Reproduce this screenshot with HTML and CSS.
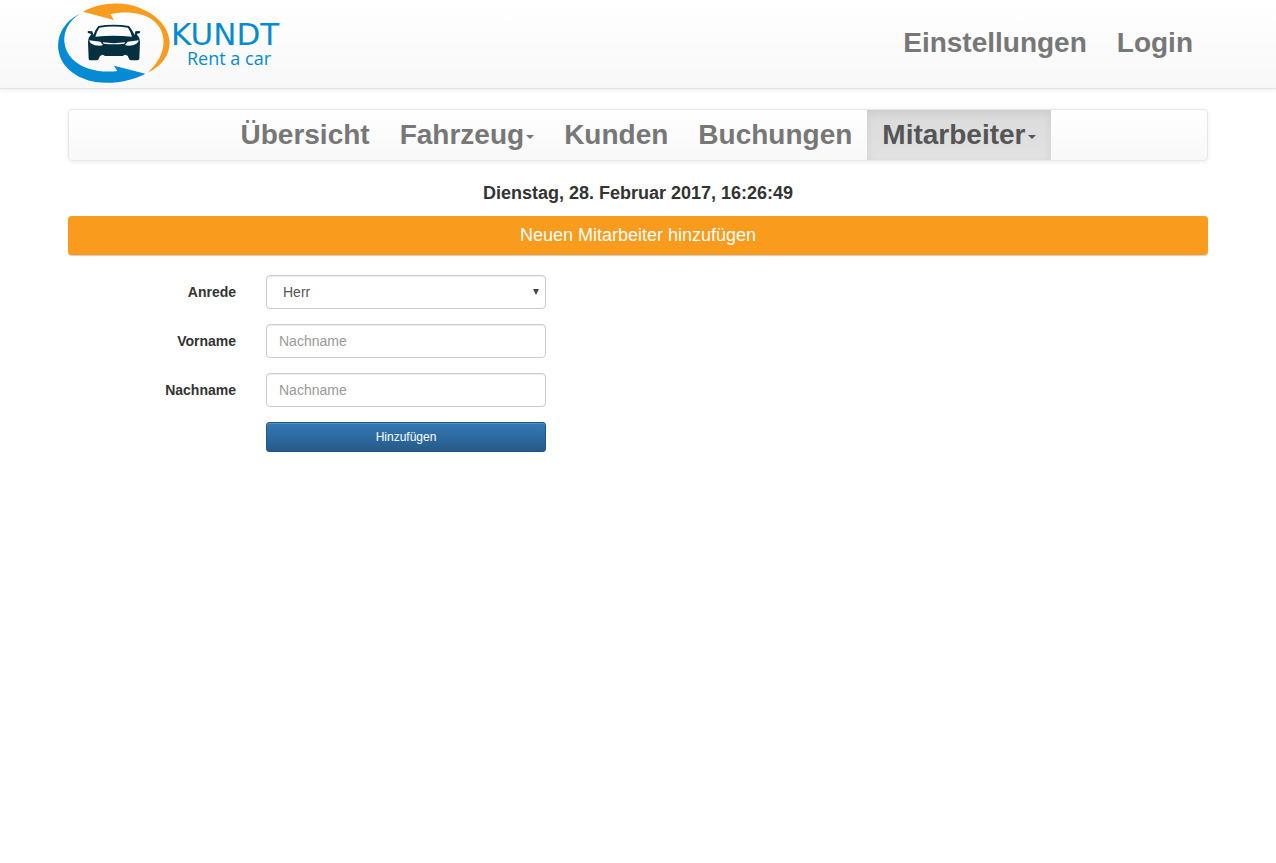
FILE: index.html
```html
<!DOCTYPE html>
<html lang="de">
<head>
<meta charset="utf-8">
<title>KUNDT Rent a car</title>
<link rel="stylesheet" href="styles.css">
</head>
<body>
<header class="topbar">
  <div class="container topbar-inner">
    <a class="brand" href="#" aria-label="KUNDT Rent a car">
      <svg class="logo" viewBox="53 0 247 88" width="247" height="88">
        <g transform="translate(50 0) scale(.33333)">
          <path fill="#f89c1f" d="M99 35C146 8 216 2 268 23C322 44 358 84 359 128C358 166 335 199 294 217C330 184 344 149 340 114C335 76 304 51 270 43C239 35 207 37 181 43L192 60Z"/>
          <path fill="#058bd3" d="M90 41C57 61 41 92 43 125C47 166 78 194 117 206C147 216 177 216 202 213L192 197L286 221C248 241 191 254 137 246C79 237 34 201 26 154C18 105 45 62 90 41Z"/>
          <path fill="#06303f" d="M145 78Q190 70 237 78Q247 90 254 105L256 94L268 93Q272 95 270 99L260 102Q269 111 270 126L268 177Q267 181 261 181H244Q239 181 237 176L233 167L225 164L218 168H165L158 164L150 168L146 177Q144 181 139 181H121Q116 181 116 176L114 126Q115 111 124 102L114 99Q111 95 115 93L127 94L130 105Q135 90 145 78Z"/>
          <path fill="#fbfbfb" d="M148 83Q190 76 234 83Q241 93 246 110Q190 104 136 110Q141 93 148 83ZM118 121L151 125L159 135Q152 139 135 136Q118 131 118 121ZM266 121L233 125L225 135Q233 139 249 136Q265 131 266 121ZM158 127Q192 132 226 127L223 131Q191 135 161 131Z"/>
        </g>
        <text class="logo-name" x="171" y="45">KUNDT</text>
        <text class="logo-claim" x="187" y="65">Rent a car</text>
      </svg>
    </a>
    <nav class="account">
      <a class="nav-link" href="#">Einstellungen</a>
      <a class="nav-link" href="#">Login</a>
    </nav>
  </div>
</header>
<main class="container">
  <nav class="menu">
    <a class="nav-link" href="#">Übersicht</a>
    <a class="nav-link" href="#">Fahrzeug<span class="caret"></span></a>
    <a class="nav-link" href="#">Kunden</a>
    <a class="nav-link" href="#">Buchungen</a>
    <a class="nav-link active" href="#">Mitarbeiter<span class="caret"></span></a>
  </nav>
  <p class="clock">Dienstag, 28. Februar 2017, 16:26:49</p>
  <h1 class="title">Neuen Mitarbeiter hinzufügen</h1>
  <form class="form">
    <label for="anrede">Anrede</label>
    <div class="select-wrap">
      <select class="control select" id="anrede"><option>Herr</option><option>Frau</option></select>
      <svg class="arrow" viewBox="0 0 6 6" width="6" height="6"><path d="M0 0H6L3 6Z" fill="#444"/></svg>
    </div>
    <label for="vorname">Vorname</label>
    <input class="control" id="vorname" type="text" placeholder="Nachname">
    <label for="nachname">Nachname</label>
    <input class="control" id="nachname" type="text" placeholder="Nachname">
    <button class="submit" type="submit">Hinzufügen</button>
  </form>
</main>
</body>
</html>
```
FILE: styles.css
```css
* { box-sizing: border-box; }
body {
  margin: 0;
  background: #fff;
  color: #333;
  font: 14px/20px "Liberation Sans", Arial, sans-serif;
}
.container {
  max-width: 1140px;
  margin: 0 auto;
}
.topbar {
  margin-bottom: 20px;
  border-bottom: 1px solid #e3e3e3;
  background: linear-gradient(#fff, #f8f8f8);
  box-shadow: 0 1px 5px rgba(0, 0, 0, .08);
}
.topbar-inner {
  display: flex;
  justify-content: space-between;
}
.brand { margin-left: -15px; }
.logo { display: block; }
.logo-name, .logo-claim { fill: #058bd3; }
.logo-name { font: 31px "DejaVu Sans", sans-serif; }
.logo-claim { font: 500 18px "Open Sans", sans-serif; }
.account {
  display: flex;
  padding-top: 18px;
}
.nav-link {
  display: flex;
  align-items: center;
  height: 50px;
  padding: 0 15px;
  color: #777;
  font-size: 28px;
  font-weight: bold;
  text-decoration: none;
}
.caret {
  margin: 4px 0 0 2px;
  border: 4px solid transparent;
  border-top-color: currentColor;
  border-bottom: 0;
}
.menu {
  display: flex;
  justify-content: center;
  border: 1px solid #e7e7e7;
  border-radius: 4px;
  background: linear-gradient(#fff, #f8f8f8);
  box-shadow: 0 1px 5px rgba(0, 0, 0, .075);
}
.active {
  color: #555;
  background: linear-gradient(#dbdbdb, #e2e2e2);
  box-shadow: inset 0 3px 9px rgba(0, 0, 0, .075);
}
.clock {
  margin: 22px 0 13px;
  font-size: 18px;
  font-weight: bold;
  text-align: center;
}
.title {
  margin: 0 0 20px;
  padding: 9px 15px 10px;
  border-radius: 4px;
  background: #f99b1c;
  box-shadow: 0 1px 1px rgba(0, 0, 0, .2);
  color: #fff;
  font-size: 18px;
  font-weight: normal;
  text-align: center;
}
.form {
  display: grid;
  grid-template-columns: 168px 280px;
  gap: 15px 30px;
  align-items: center;
}
.form label {
  font-weight: bold;
  text-align: right;
}
.control {
  display: block;
  width: 100%;
  height: 34px;
  padding: 6px 12px;
  border: 1px solid #ccc;
  border-radius: 4px;
  background: #fff;
  box-shadow: inset 0 1px 1px rgba(0, 0, 0, .075);
  color: #555;
  font: inherit;
}
.control::placeholder { color: #999; }
.select-wrap { position: relative; }
.select {
  appearance: none;
  padding-left: 16px;
}
.arrow {
  position: absolute;
  top: 14px;
  right: 7px;
  pointer-events: none;
}
.submit {
  grid-column: 2;
  height: 30px;
  border: 1px solid #245580;
  border-radius: 3px;
  background: linear-gradient(#337ab7, #265a88);
  box-shadow: inset 0 1px 0 rgba(255, 255, 255, .15), 0 1px 1px rgba(0, 0, 0, .075);
  color: #fff;
  font: 12px/18px "Liberation Sans", Arial, sans-serif;
}
```
